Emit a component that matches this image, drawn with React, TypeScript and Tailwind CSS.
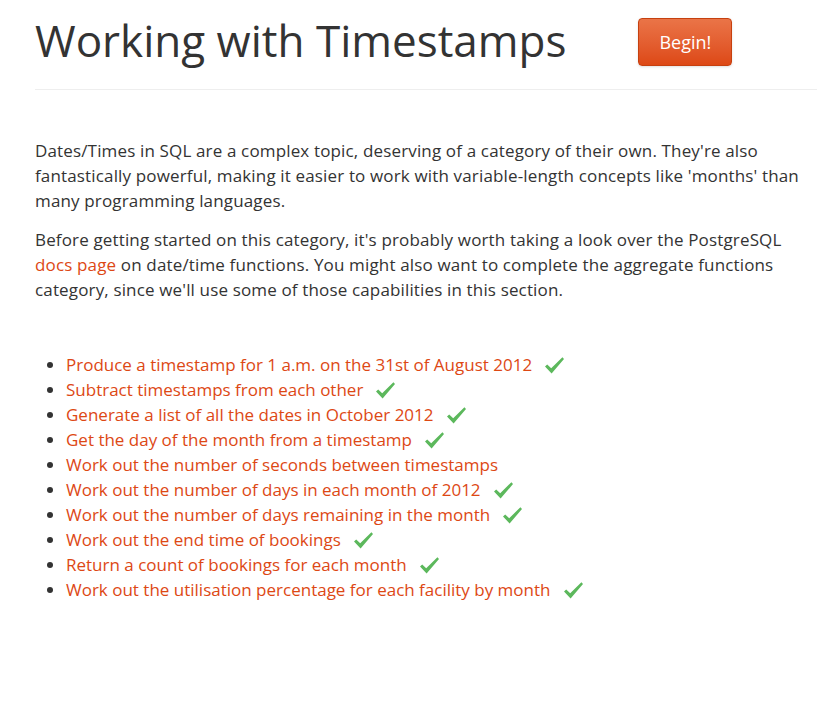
const exercises = [
  { title: "Produce a timestamp for 1 a.m. on the 31st of August 2012", done: true },
  { title: "Subtract timestamps from each other", done: true },
  { title: "Generate a list of all the dates in October 2012", done: true },
  { title: "Get the day of the month from a timestamp", done: true },
  { title: "Work out the number of seconds between timestamps", done: false },
  { title: "Work out the number of days in each month of 2012", done: true },
  { title: "Work out the number of days remaining in the month", done: true },
  { title: "Work out the end time of bookings", done: true },
  { title: "Return a count of bookings for each month", done: true },
  { title: "Work out the utilisation percentage for each facility by month", done: true },
];

// filled check glyph, heavier at the bottom like the reference
const Tick = () => (
  <svg width="21" height="19" viewBox="0 0 21 19" className="ml-[12px] inline-block align-[-4px]">
    <path d="M1 10.5 L3.2 8.6 L7.2 12.2 L18.4 1.2 L20 3 L7.6 17.6 Z" fill="#5cb85c" />
  </svg>
);

export default function App() {
  return (
    <div className="min-h-[726px] bg-white pl-[35px] text-[#333] font-['Open_Sans',sans-serif] overflow-hidden">
      <div className="flex items-center gap-[72px] pt-[12px] pb-[21px] border-b border-[#eee] w-[900px]">
        <h1 className="text-[44px] leading-[56px] font-normal text-[#333]">Working with Timestamps</h1>
        <button className="mt-[4px] h-[48px] w-[94px] rounded-[4px] border border-[#c6400f] bg-gradient-to-b from-[#ea7447] to-[#dd4814] text-white text-[18px] shadow-sm">
          Begin!
        </button>
      </div>

      <div className="pt-[48px] text-[17px] leading-[25px] w-[790px]">
        <p className="tracking-[0.15px]">
          Dates/Times in SQL are a complex topic, deserving of a category of their own. They're also
          <br />
          fantastically powerful, making it easier to work with variable-length concepts like 'months' than
          <br />
          many programming languages.
        </p>
        <p className="mt-[14px] tracking-[0.15px]">
          Before getting started on this category, it's probably worth taking a look over the PostgreSQL
          <br />
          <a className="text-[#dd4814]">docs page</a> on date/time functions. You might also want to complete the aggregate functions
          <br />
          category, since we'll use some of those capabilities in this section.
        </p>

        <ul className="mt-[50px] list-disc pl-[31px]">
          {exercises.map((ex) => (
            <li key={ex.title} className="leading-[25px]">
              <a className="text-[#dd4814]">{ex.title}</a>
              {ex.done && <Tick />}
            </li>
          ))}
        </ul>
      </div>
    </div>
  );
}
